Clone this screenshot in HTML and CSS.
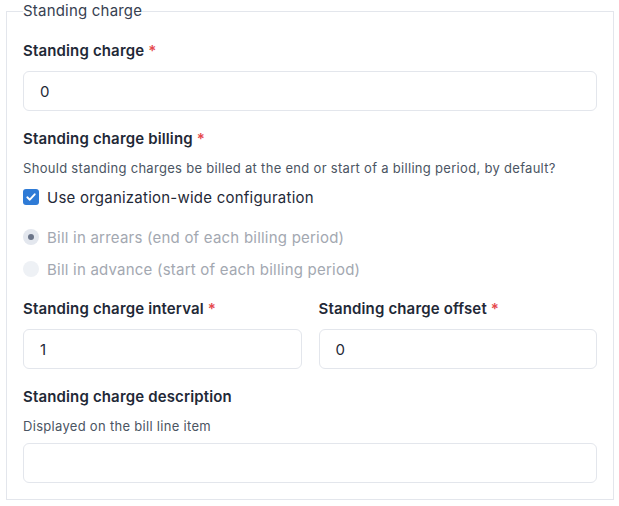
FILE: index.html
```html
<!DOCTYPE html>
<html>
<head>
<meta charset="utf-8">
<link rel="stylesheet" href="styles.css">
</head>
<body>
<fieldset class="group">
  <legend class="legend">Standing charge</legend>

  <div class="field">
    <label class="label">Standing charge <span class="req">*</span></label>
    <div class="input">0</div>
  </div>

  <div class="field">
    <label class="label">Standing charge billing <span class="req">*</span></label>
    <p class="help">Should standing charges be billed at the end or start of a billing period, by default?</p>
    <div class="check-row">
      <span class="checkbox">
        <svg width="12" height="12" viewBox="0 0 12 12"><path d="M2.3 6.3 L4.8 8.7 L9.7 3.3" fill="none" stroke="#fff" stroke-width="1.9" stroke-linecap="round" stroke-linejoin="round"/></svg>
      </span>
      <span class="check-text">Use organization-wide configuration</span>
    </div>
    <div class="radios">
      <div class="radio-row"><span class="radio checked"></span><span class="radio-text">Bill in arrears (end of each billing period)</span></div>
      <div class="radio-row"><span class="radio"></span><span class="radio-text">Bill in advance (start of each billing period)</span></div>
    </div>
  </div>

  <div class="row">
    <div class="field">
      <label class="label">Standing charge interval <span class="req">*</span></label>
      <div class="input">1</div>
    </div>
    <div class="field">
      <label class="label">Standing charge offset <span class="req">*</span></label>
      <div class="input">0</div>
    </div>
  </div>

  <div class="field">
    <label class="label">Standing charge description</label>
    <p class="help help-tight">Displayed on the bill line item</p>
    <div class="input"></div>
  </div>
</fieldset>
</body>
</html>
```

FILE: styles.css
```css
* { box-sizing: border-box; }
html, body { background: #fff; }
body {
  margin: 0;
  padding: 1px 6px 0 6px;
  font-family: Inter, "Noto Sans", sans-serif;
  color: #1f2937;
}
.group {
  margin: 0;
  width: 608px;
  border: 1px solid #e3e6ec;
  padding: 20px 16px 16px 16px;
  display: flex;
  flex-direction: column;
  gap: 18px;
}
.legend {
  padding: 0;
  font-size: 15px;
  line-height: 20px;
  color: #374151;
  letter-spacing: 0.2px;
}
.field { display: flex; flex-direction: column; }
.label {
  font-size: 15px;
  line-height: 20px;
  font-weight: 600;
  letter-spacing: 0.15px;
  color: #1f2937;
  margin-bottom: 10px;
}
.req { color: #e5484d; }
.input {
  height: 40px;
  border: 1px solid #e3e6ec;
  border-radius: 6px;
  padding: 0 16px;
  font-size: 15px;
  display: flex;
  align-items: center;
  color: #1f2937;
}
.help {
  margin: -1px 0 9px 0;
  font-size: 13px;
  line-height: 20px;
  letter-spacing: 0.3px;
  color: #4b5563;
}
.help-tight { margin-bottom: 7px; }
.check-row { display: flex; align-items: center; gap: 8px; height: 20px; }
.checkbox {
  width: 16px; height: 16px;
  border-radius: 3px;
  background: #2f7bd6;
  display: flex; align-items: center; justify-content: center;
}
.check-text { font-size: 15px; color: #1f2937; letter-spacing: 0.23px; }
.radios { display: flex; flex-direction: column; gap: 12px; margin-top: 20px; }
.radio-row { display: flex; align-items: center; gap: 8px; height: 20px; }
.radio {
  width: 16px; height: 16px;
  border-radius: 50%;
  background: #eef1f5;
  display: flex; align-items: center; justify-content: center;
}
.radio.checked { background: #e3e7ee; }
.radio.checked::after {
  content: "";
  width: 6px; height: 6px; border-radius: 50%;
  background: #6b7589;
}
.radio-text { font-size: 15px; color: #a3a8b1; letter-spacing: 0.22px; }
.row { display: grid; grid-template-columns: 1fr 1fr; gap: 17px; margin-top: 2px; }
```
